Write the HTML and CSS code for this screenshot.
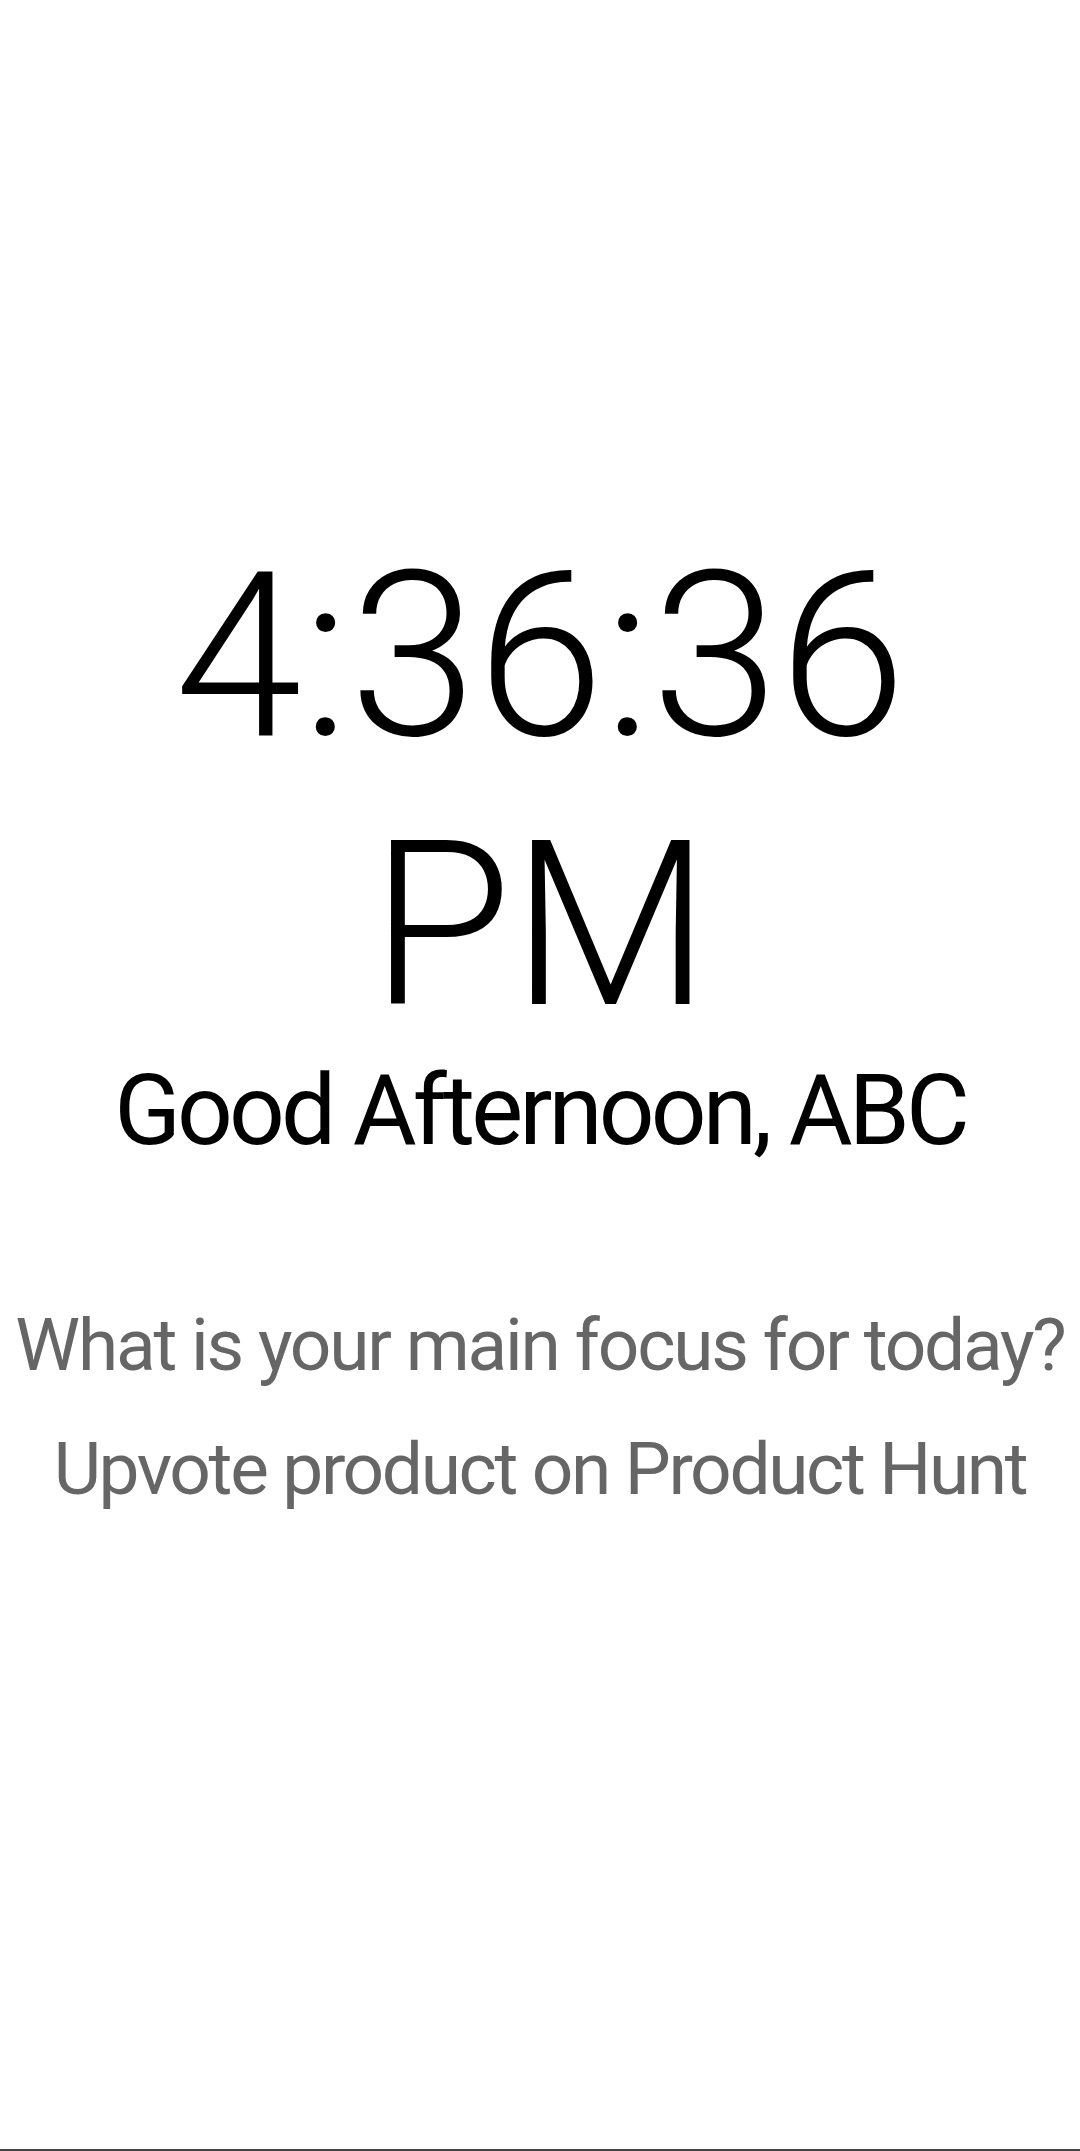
FILE: index.html
```html
<!DOCTYPE html>
<html>
<head>
<meta charset="utf-8">
<link rel="stylesheet" href="styles.css">
</head>
<body>
<main class="screen">
  <div class="clock">4:36:36 PM</div>
  <div class="greeting">Good Afternoon, ABC</div>
  <div class="focus-question">What is your main focus for today?</div>
  <div class="focus-answer">Upvote product on Product Hunt</div>
</main>
</body>
</html>
```
FILE: styles.css
```css
html, body {
  margin: 0;
  padding: 0;
  background: #ffffff;
}
.screen {
  box-sizing: border-box;
  height: 2151px;
  border-bottom: 2px solid #444444;
  display: flex;
  flex-direction: column;
  align-items: center;
  padding-top: 522px;
  font-family: Roboto, "Noto Sans", sans-serif;
  text-align: center;
}
.clock {
  font-size: 230px;
  font-weight: 300;
  line-height: 269px;
  letter-spacing: -0.5px;
  color: #000000;
  width: 1080px;
}
.greeting {
  font-size: 98px;
  font-weight: 400;
  line-height: 115px;
  letter-spacing: -3.9px;
  color: #000000;
  margin-top: -7px;
  white-space: nowrap;
}
.focus-question {
  font-size: 73px;
  line-height: 86px;
  letter-spacing: -2.2px;
  color: #666666;
  margin-top: 134px;
  white-space: nowrap;
}
.focus-answer {
  font-size: 73px;
  line-height: 86px;
  letter-spacing: -2.35px;
  color: #666666;
  margin-top: 38px;
  white-space: nowrap;
}
```
